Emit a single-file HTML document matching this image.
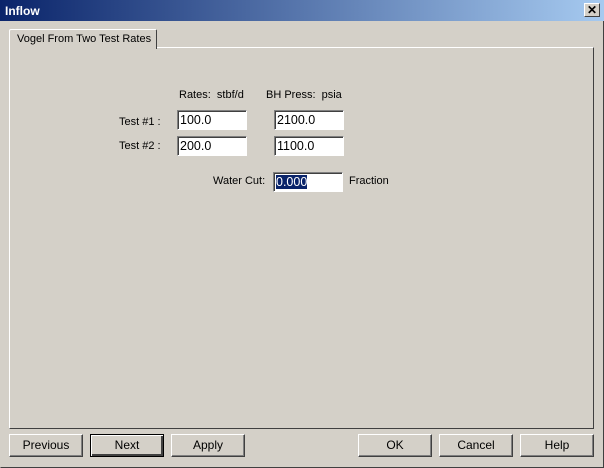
<!DOCTYPE html>
<html><head><style>
body{margin:0;width:604px;height:468px;background:#d4d0c8;font-family:"Liberation Sans",sans-serif;font-size:11px;color:#000;position:relative;overflow:hidden}
.abs{position:absolute;white-space:nowrap}
.title{left:0;top:0;width:604px;height:21px;background:linear-gradient(90deg,#0a246a,#a6caf0);}
.title span{position:absolute;left:5px;top:4px;color:#fff;font-weight:bold;font-size:12px}
.close{right:4px;top:3px;width:14px;height:12px;background:#d4d0c8;border:1px solid;border-color:#fff #404040 #404040 #fff;text-align:center;font-weight:bold;line-height:12px;font-size:12px}
.frame{left:0;top:0;width:602px;height:466px;border:1px solid;border-color:#d4d0c8 #404040 #404040 #d4d0c8}
.panel{left:9px;top:47px;width:583px;height:380px;border:1px solid;border-color:#fff #404040 #404040 #fff}
.tab{left:9px;top:29px;width:146px;height:19px;border:1px solid;border-bottom:none;border-color:#fff #404040 #404040 #fff;background:#d4d0c8;z-index:2;border-radius:2px 2px 0 0}
.tab span{position:absolute;left:7px;top:3px;font-size:11px;white-space:nowrap}
.inp{background:#fff;border:1px solid;border-color:#808080 #fff #fff #808080;box-shadow:inset 1px 1px 0 #404040;width:68px;height:18px;box-sizing:content-box}
.inp span{position:absolute;left:2px;top:2px;font-size:12.5px}
.btn{width:72px;height:21px;border:1px solid;border-color:#fff #404040 #404040 #fff;box-shadow:inset -1px -1px 0 #808080;text-align:center;line-height:21px;font-size:12px}
</style></head><body>
<div class="abs frame"></div>
<div class="abs title"><span>Inflow</span><div class="abs close">✕</div></div>
<div class="abs panel"></div>
<div class="abs tab"><span>Vogel From Two Test Rates</span></div>
<div class="abs" style="left:179px;top:89px">Rates:&nbsp; stbf/d</div>
<div class="abs" style="left:266px;top:89px">BH Press:&nbsp; psia</div>
<div class="abs" style="left:119px;top:116px">Test #1 :</div>
<div class="abs" style="left:119px;top:140px">Test #2 :</div>
<div class="abs inp" style="left:177px;top:110px"><span>100.0</span></div>
<div class="abs inp" style="left:274px;top:110px"><span>2100.0</span></div>
<div class="abs inp" style="left:177px;top:136px"><span>200.0</span></div>
<div class="abs inp" style="left:274px;top:136px"><span>1100.0</span></div>
<div class="abs" style="left:213px;top:175px">Water Cut:</div>
<div class="abs inp" style="left:273px;top:172px"><span style="background:#0a246a;color:#fff">0.000</span></div>
<div class="abs" style="left:349px;top:175px">Fraction</div>
<div class="abs btn" style="left:9px;top:434px">Previous</div>
<div class="abs btn" style="left:90px;top:434px;border-color:#000;box-shadow:inset 1px 1px 0 #fff,inset -2px -2px 0 #404040">Next</div>
<div class="abs btn" style="left:171px;top:434px">Apply</div>
<div class="abs btn" style="left:358px;top:434px">OK</div>
<div class="abs btn" style="left:439px;top:434px">Cancel</div>
<div class="abs btn" style="left:520px;top:434px">Help</div>
</body></html>
